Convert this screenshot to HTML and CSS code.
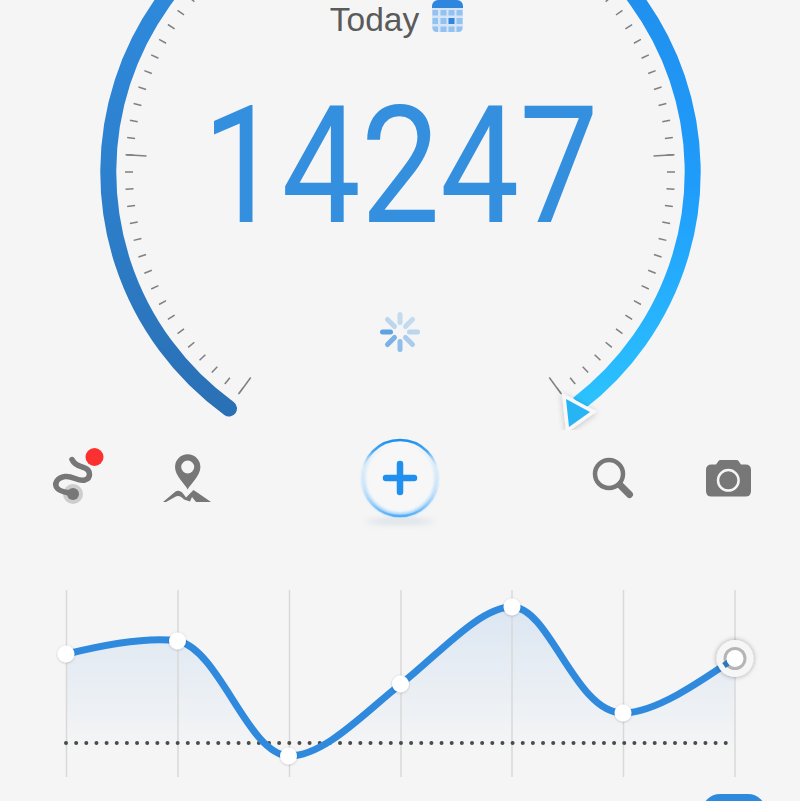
FILE: index.html
```html
<!DOCTYPE html>
<html lang="en">
<head>
<meta charset="utf-8">
<title>Steps</title>
<link rel="stylesheet" href="styles.css">
</head>
<body>
<main class="page">
  <section class="gauge">
    <svg class="dial" width="800" height="430" viewBox="0 0 800 430" aria-hidden="true">
      <defs>
        <linearGradient id="arcLeft" gradientUnits="userSpaceOnUse" x1="0" y1="0" x2="0" y2="410">
          <stop offset="0" stop-color="#2e89db"/>
          <stop offset="0.45" stop-color="#2d80cd"/>
          <stop offset="1" stop-color="#2a70b5"/>
        </linearGradient>
        <linearGradient id="arcRight" gradientUnits="userSpaceOnUse" x1="0" y1="0" x2="0" y2="410">
          <stop offset="0" stop-color="#2090ee"/>
          <stop offset="0.45" stop-color="#1f9cfb"/>
          <stop offset="1" stop-color="#2cc3fe"/>
        </linearGradient>
        <filter id="markShadow" x="-50%" y="-50%" width="200%" height="200%">
          <feDropShadow dx="0" dy="1" stdDeviation="3" flood-color="#000" flood-opacity="0.22"/>
        </filter>
      </defs>
      <path class="ticks" pathLength="80" d="M240.7 391.2 A271 271 0 1 1 559.3 391.2"/>
      <line class="tick-long" x1="250.7" y1="377.5" x2="238.9" y2="393.7"/>
      <line class="tick-long" x1="549.3" y1="377.5" x2="561.1" y2="393.7"/>
      <line class="tick-long" x1="146.5" y1="156" x2="126.5" y2="154.8"/>
      <line class="tick-long" x1="653.5" y1="156" x2="673.5" y2="154.8"/>
      <path class="arc arc-left" d="M229 408.500 A292 292 0 0 1 400 -120"/>
      <path class="arc arc-right" d="M400 -120 A292 292 0 0 1 578 404"/>
      <polygon class="marker" points="566,399 590,412 569,427" filter="url(#markShadow)"/>
    </svg>
    <div class="today">
      <span class="today-label">Today</span>
      <svg class="calendar" width="31" height="33" viewBox="0 0 31 33" aria-hidden="true">
        <path class="cal-head" d="M0 8V6a6 6 0 0 1 6-6h19a6 6 0 0 1 6 6v2z"/>
        <path class="cal-body" d="M0 8h31v19a5 5 0 0 1-5 5H5a5 5 0 0 1-5-5z"/>
        <g class="cal-cells">
          <rect x="0.500" y="10" width="5.500" height="5.500"/><rect x="8.500" y="10" width="6" height="5.500"/><rect x="16.500" y="10" width="6" height="5.500"/><rect x="24.500" y="10" width="6" height="5.500"/>
          <rect x="0.500" y="18" width="5.500" height="6"/><rect x="8.500" y="18" width="6" height="6"/><rect x="24.500" y="18" width="6" height="6"/>
          <path d="M0.500 26.500H6V32H5Q0.500 32 0.500 27.500Z"/><rect x="8.500" y="26.500" width="6" height="5.500"/><rect x="16.500" y="26.500" width="6" height="5.500"/><path d="M24.500 26.500H30.500V27.500Q30.500 32 26 32H24.500Z"/>
        </g>
        <rect class="cal-today" x="16.500" y="18" width="6" height="6"/>
      </svg>
    </div>
    <div class="count">14247</div>
    <svg class="spinner" width="42" height="42" viewBox="-21 -21 42 42" aria-hidden="true">
      <line class="sp sp1" x1="-9.500" y1="0" x2="-17.500" y2="0"/>
      <line class="sp sp2" x1="-5.500" y1="5.500" x2="-12.500" y2="12.500"/>
      <line class="sp sp3" x1="0" y1="9.500" x2="0" y2="17.500"/>
      <line class="sp sp4" x1="5.500" y1="5.500" x2="12.500" y2="12.500"/>
      <line class="sp sp5" x1="9.500" y1="0" x2="17.500" y2="0"/>
      <line class="sp sp6" x1="5.500" y1="-5.500" x2="12.500" y2="-12.500"/>
      <line class="sp sp7" x1="0" y1="-9.500" x2="0" y2="-17.500"/>
      <line class="sp sp8" x1="-5.500" y1="-5.500" x2="-12.500" y2="-12.500"/>
    </svg>
  </section>

  <section class="toolbar">
    <svg class="tool tool-route" width="60" height="64" viewBox="50 445 60 64" aria-label="Route">
      <circle class="halo" cx="73" cy="494" r="10"/>
      <path class="route" d="M72 459.500C75 466 81 466.500 85 468C91 470.500 91 478 85 480C78 482 73 475.500 65 476.500C57 477.500 53.500 484 57.500 488.500C61 492.500 68 492 73 494"/>
      <circle class="ink" cx="73" cy="494" r="6"/>
      <circle class="alert" cx="94.500" cy="457" r="9"/>
    </svg>
    <svg class="tool tool-pin" width="52" height="50" viewBox="162 454 52 50" aria-label="Places">
      <path class="ink" fill-rule="evenodd" d="M187.700 489.500C185 484 175 476 175 467A12.700 12.700 0 0 1 200.400 467C200.400 476 190.500 484 187.700 489.500ZM187.700 460.500A6.500 6.500 0 1 0 187.700 473.500A6.500 6.500 0 1 0 187.700 460.500Z"/>
      <path class="ink" d="M163 502L175.500 491.500C178 490 181 491 183 493.500L186 497.500L193.500 490L198 493L211 502H196L192 497L190 501.500L184 499.500C181 496 178 495 175 497L166 502Z"/>
    </svg>
    <div class="add">
      <div class="add-floor"></div>
      <svg class="add-ring" width="100" height="100" viewBox="-50 -50 100 100" aria-label="Add">
        <defs>
          <linearGradient id="ringTop" x1="0" y1="0" x2="0" y2="1">
            <stop offset="0" stop-color="#1f8ff0"/>
            <stop offset="0.15" stop-color="#4aa7f4"/>
            <stop offset="0.36" stop-color="#cfe7fb" stop-opacity="0.3"/>
            <stop offset="0.62" stop-color="#cfe7fb" stop-opacity="0.4"/>
            <stop offset="1" stop-color="#53aef7"/>
          </linearGradient>
          <linearGradient id="ringHaze" x1="0" y1="0" x2="0" y2="1">
            <stop offset="0" stop-color="#a8d6fb" stop-opacity="0"/>
            <stop offset="0.4" stop-color="#b8ddfb" stop-opacity="0.6"/>
            <stop offset="1" stop-color="#8ecbfb"/>
          </linearGradient>
          <filter id="ringBlur" x="-30%" y="-30%" width="160%" height="160%">
            <feGaussianBlur stdDeviation="1.800"/>
          </filter>
          <filter id="ringSoft" x="-10%" y="-10%" width="120%" height="120%">
            <feGaussianBlur stdDeviation="0.500"/>
          </filter>
        </defs>
        <circle class="ring-fill" r="36.500"/>
        <circle class="ring-glow" cx="0" cy="0.500" r="36.500" filter="url(#ringBlur)"/>
        <circle class="ring-line" r="38" filter="url(#ringSoft)"/>
        <path class="plus" d="M0 -14V14M-14 0H14"/>
      </svg>
    </div>
    <svg class="tool tool-search" width="44" height="44" viewBox="591 455 44 44" aria-label="Search">
      <circle class="lens" cx="609" cy="474" r="14"/>
      <line class="handle" x1="620" y1="485" x2="629.500" y2="494.500"/>
    </svg>
    <svg class="tool tool-camera" width="46" height="38" viewBox="705 459 46 38" aria-label="Camera">
      <path class="ink" d="M711.500 464.500H716L718.500 461Q719 460 720.500 460H736.500Q738 460 738.500 461L741 464.500H745.500Q751 464.500 751 470V491Q751 496.500 745.500 496.500H711.500Q706 496.500 706 491V470Q706 464.500 711.500 464.500Z"/>
      <circle class="cam-lens" cx="728.300" cy="480.300" r="10.300"/>
    </svg>
  </section>

  <section class="chart">
    <svg class="plot" width="800" height="204" viewBox="0 590 800 204" aria-label="Weekly steps chart">
      <defs>
        <linearGradient id="areaFill" gradientUnits="userSpaceOnUse" x1="0" y1="605" x2="0" y2="752">
          <stop offset="0" stop-color="#dbe6f2"/>
          <stop offset="1" stop-color="#dbe6f2" stop-opacity="0"/>
        </linearGradient>
        <filter id="dotShadow" x="-50%" y="-50%" width="200%" height="200%">
          <feDropShadow dx="0" dy="0.500" stdDeviation="1.200" flood-color="#000" flood-opacity="0.25"/>
        </filter>
        <filter id="ringShadow" x="-50%" y="-50%" width="200%" height="200%">
          <feDropShadow dx="0" dy="0" stdDeviation="2.500" flood-color="#000" flood-opacity="0.35"/>
        </filter>
      </defs>
      <path class="area" d="M66.500 654C95 647 145 636 178 641C220 650 248 755 289 756C325 756 365 712 401 684C440 653 480 607 512 607C550 607 575 713 623 713C655 713 700 682 735 658V760H66.500Z"/>
      <g class="grid">
        <line x1="66.500" y1="590" x2="66.500" y2="777"/>
        <line x1="178" y1="590" x2="178" y2="777"/>
        <line x1="289.500" y1="590" x2="289.500" y2="777"/>
        <line x1="401" y1="590" x2="401" y2="777"/>
        <line x1="512" y1="590" x2="512" y2="777"/>
        <line x1="623.500" y1="590" x2="623.500" y2="777"/>
        <line x1="735" y1="590" x2="735" y2="777"/>
      </g>
      <line class="average" x1="66" y1="743" x2="728" y2="743"/>
      <path class="curve" d="M66.500 654C95 647 145 636 178 641C220 650 248 755 289 756C325 756 365 712 401 684C440 653 480 607 512 607C550 607 575 713 623 713C655 713 700 682 735 658"/>
      <g class="points" filter="url(#dotShadow)">
        <circle cx="66" cy="654" r="8.500"/>
        <circle cx="177.500" cy="641" r="8.500"/>
        <circle cx="288.500" cy="756" r="8.500"/>
        <circle cx="400.500" cy="684" r="8.500"/>
        <circle cx="512" cy="607" r="8.500"/>
        <circle cx="623" cy="713" r="8.500"/>
      </g>
      <circle class="current-halo" cx="735" cy="658.500" r="18.500" filter="url(#ringShadow)"/>
      <circle class="current-ring" cx="735" cy="658.500" r="11.500"/>
      <path class="current-tail" d="M724 665.500L729 662"/>
      <circle class="points" cx="735" cy="658.500" r="8.500"/>
    </svg>
    <div class="cta"></div>
  </section>
</main>
</body>
</html>
```
FILE: styles.css
```css
* { box-sizing: border-box; }
html, body { margin: 0; padding: 0; background: #f5f5f5; }
.page {
  width: 800px;
  height: 801px;
  overflow: hidden;
  display: flex;
  flex-direction: column;
  font-family: "Liberation Sans", Arial, sans-serif;
}

/* Gauge */
.gauge {
  position: relative;
  height: 430px;
  flex: none;
  display: flex;
  flex-direction: column;
  align-items: center;
}
.dial { position: absolute; left: 0; top: 0; }
.ticks {
  fill: none;
  stroke: #808080;
  stroke-width: 8;
  stroke-dasharray: 0.09 0.91;
  stroke-dashoffset: 0.045;
}
.tick-long { stroke: #808080; stroke-width: 1.500; }
.arc { fill: none; stroke-width: 16; }
.arc-left { stroke: url(#arcLeft); stroke-linecap: round; }
.arc-right { stroke: url(#arcRight); }
.marker {
  fill: #28b4f5;
  stroke: #f8f8f8;
  stroke-width: 7;
  paint-order: stroke;
  stroke-linejoin: miter;
}
.today {
  position: relative;
  height: 36px;
  margin-left: -7px;
  display: flex;
  align-items: flex-start;
  gap: 13px;
}
.today-label { font-size: 33.500px; line-height: 40px; color: #5a5a5a; }
.calendar { display: block; }
.cal-head { fill: #2f86de; }
.cal-body { fill: #d5e5f6; }
.cal-cells { fill: #93c2f1; }
.cal-today { fill: #2f86de; }
.count {
  position: relative;
  margin-top: 45px;
  font-family: Roboto, "Liberation Sans", sans-serif;
  font-weight: 400;
  font-size: 164px;
  line-height: 170px;
  color: #358fdf;
  transform: scaleX(0.86);
}
.spinner { position: relative; margin-top: 60px; }
.sp { stroke-width: 5; stroke-linecap: round; }
.sp1 { stroke: #5ea2e2; }
.sp2 { stroke: #7ab1e6; }
.sp3 { stroke: #90bdea; }
.sp4 { stroke: #a9cbec; }
.sp5 { stroke: #bcd6ee; }
.sp6 { stroke: #c3daef; }
.sp7 { stroke: #c3daef; }
.sp8 { stroke: #bcd6ee; }

/* Toolbar */
.toolbar {
  height: 110px;
  flex: none;
  display: flex;
  align-items: flex-start;
  padding-left: 50px;
}
.tool { display: block; flex: none; }
.tool-route { margin-top: 15px; }
.tool-pin { margin: 24px 0 0 52px; }
.tool-search { margin: 25px 0 0 141px; }
.tool-camera { margin: 29px 0 0 70px; }
.ink { fill: #777; }
.halo { fill: #cdcdcd; }
.route { fill: none; stroke: #777; stroke-width: 5.500; stroke-linecap: round; }
.alert { fill: #fb3030; }
.lens { fill: none; stroke: #777; stroke-width: 4.500; }
.handle { stroke: #777; stroke-width: 7; stroke-linecap: round; }
.cam-lens { fill: #777; stroke: #f5f5f5; stroke-width: 2.500; }

/* Add button */
.add {
  position: relative;
  flex: none;
  width: 100px;
  height: 100px;
  margin: -2px 0 0 136px;
}
.add-floor {
  position: absolute;
  left: 14px;
  top: 92px;
  width: 72px;
  height: 3px;
  border-radius: 50%;
  background: #9db2c6;
  filter: blur(3px);
  opacity: 0.6;
}
.add-ring { position: relative; display: block; }
.ring-fill { fill: #f7f7f7; }
.ring-glow { fill: none; stroke: url(#ringHaze); stroke-width: 3.500; }
.ring-line { fill: none; stroke: url(#ringTop); stroke-width: 2.500; }
.plus { fill: none; stroke: #1f8ff0; stroke-width: 6.500; stroke-linecap: round; }

/* Chart */
.chart {
  flex: 1;
  padding-top: 50px;
}
.plot { display: block; }
.area { fill: url(#areaFill); }
.grid line { stroke: #d9d9d9; stroke-width: 1.500; }
.average {
  stroke: #4a4a4a;
  stroke-width: 4;
  stroke-linecap: round;
  stroke-dasharray: 0 10.150;
}
.curve { fill: none; stroke: #2f8ade; stroke-width: 7; }
.points { fill: #fff; }
.current-halo { fill: #f6f6f6; }
.current-ring { fill: #b5b5b5; }
.current-tail { fill: none; stroke: #2a78c0; stroke-width: 6; }
.cta {
  margin-left: 702px;
  width: 64px;
  height: 30px;
  border-radius: 18px 18px 0 0;
  background: #2f8ade;
}
```
